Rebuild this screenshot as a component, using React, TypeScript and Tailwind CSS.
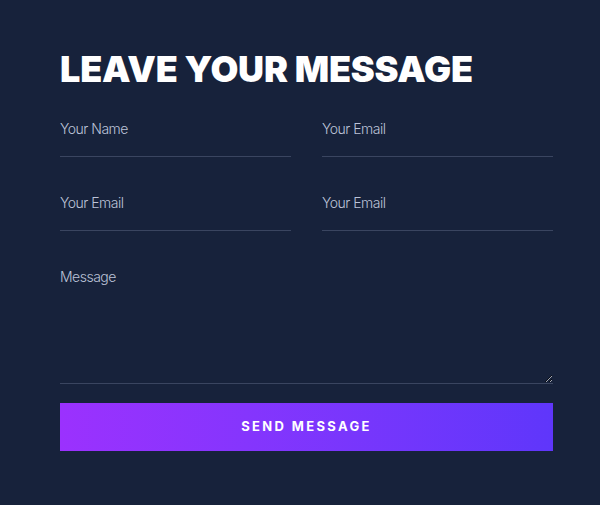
import React from "react";

export default function App() {
  const inputCls =
    "w-full bg-transparent border-0 border-b border-[#3a4560] pt-[1px] pb-[17px] text-[14px] leading-5 font-light tracking-[-0.5px] text-white outline-none placeholder:text-[#bcc3d8]";
  return (
    <div
      className="w-[600px] h-[505px] bg-[#17223b] pl-[60px] pr-[47px] pt-[51px]"
      style={{ fontFamily: "Inter, 'Noto Sans', sans-serif" }}
    >
      <h1 className="text-[36px] leading-[36px] font-black text-white tracking-[-0.2px] whitespace-nowrap">
        LEAVE YOUR MESSAGE
      </h1>
      <form className="mt-[31px] flex flex-col" onSubmit={(e) => e.preventDefault()}>
        <div className="grid grid-cols-2 gap-x-[31px] gap-y-[35px]">
          <input className={inputCls} placeholder="Your Name" />
          <input className={inputCls} placeholder="Your Email" />
          <input className={inputCls} placeholder="Your Email" />
          <input className={inputCls} placeholder="Your Email" />
        </div>
        <textarea
          className="mt-[35px] w-full h-[118px] bg-transparent border-0 border-b border-[#3a4560] pt-[1px] px-0 text-[14px] leading-5 font-light tracking-[-0.5px] text-white outline-none placeholder:text-[#bcc3d8]"
          placeholder="Message"
        />
        <button
          type="submit"
          className="mt-[19px] h-[48px] w-full bg-gradient-to-r from-[#9b31fe] to-[#5f36fb] text-white text-[13px] font-bold tracking-[0.18em]"
        >
          SEND MESSAGE
        </button>
      </form>
    </div>
  );
}
